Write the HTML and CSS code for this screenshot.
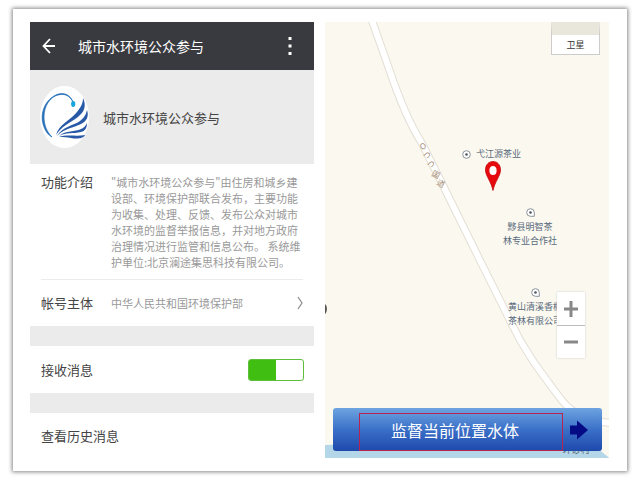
FILE: index.html
```
<!DOCTYPE html>
<html lang="zh-CN">
<head>
  <meta charset="UTF-8">
  <meta name="viewport" content="width=device-width, initial-scale=1.0">
  <title>城市水环境公众参与</title>
  <link rel="stylesheet" href="styles.css">
</head>
<body>

<main class="frame">
  <section class="account">
    <header class="topbar">
      <button class="icon-btn" type="button" aria-label="返回">
        <svg width="14" height="16" viewBox="0 0 14 16">
          <path d="M8 1 L1.5 8 L8 15 M1.5 8 H13" fill="none" stroke="#fff" stroke-width="1.8"/>
        </svg>
      </button>
      <h1>城市水环境公众参与</h1>
      <button class="icon-btn" type="button" aria-label="更多">
        <svg width="4" height="20" viewBox="0 0 4 20">
          <g fill="#fff">
            <rect x="0.5" y="1" width="3" height="3"/>
            <rect x="0.5" y="8.5" width="3" height="3"/>
            <rect x="0.5" y="16" width="3" height="3"/>
          </g>
        </svg>
      </button>
    </header>

    <div class="profile">
      <svg class="avatar" width="49" height="62" viewBox="0 0 49 62">
        <ellipse cx="24.5" cy="31" rx="24.5" ry="31" fill="#fff"/>
        <path d="M33 16 C30 8 22 5 14 10 C5 15 0 27 3 38 C5 45 8 49 12 51 C7 46 4 39 4 31 C4 20 10 11 18 9 C25 7 30 10 33 16Z" fill="#2870b8" stroke="#2870b8" stroke-width="0.7"/>
        <ellipse cx="33.2" cy="18" rx="2.1" ry="3" fill="#18a5dd"/>
        <g fill="#2759a6">
          <path d="M16 49 C19 38 30 35 37 26 C42 20 43 16 43 12 C46 18 45 24 41 28 C34 36 24 37 16 49Z"/>
          <path d="M17 50 C23 40 33 40 40 35 C45 31 46 28 47 24 C49 30 47 35 41 38 C33 42 25 42 17 50Z"/>
          <path d="M19 50 C26 44 35 46 41 43 C44 42 46 39 47 37 C47 42 45 45 41 46 C33 48 26 46 19 50Z"/>
          <path d="M19 51 C27 48 36 51 45 49 C43 53 36 53 31 52 C27 51 24 51 19 51Z"/>
        </g>
      </svg>
      <h2>城市水环境公众参与</h2>
    </div>

    <div class="details">
      <div class="row intro">
        <span class="label">功能介绍</span>
        <p>"城市水环境公众参与"由住房和城乡建<br>设部、环境保护部联合发布，主要功能<br>为收集、处理、反馈、发布公众对城市<br>水环境的监督举报信息，并对地方政府<br>治理情况进行监管和信息公布。 系统维<br>护单位:北京澜途集思科技有限公司。</p>
      </div>
      <a class="row owner" href="#">
        <span class="label">帐号主体</span>
        <span class="value">中华人民共和国环境保护部</span>
        <svg width="6" height="14" viewBox="0 0 6 14">
          <path d="M1 1 L5 7 L1 13" fill="none" stroke="#888" stroke-width="1.2"/>
        </svg>
      </a>
    </div>

    <div class="row receive">
      <label class="label" for="receive">接收消息</label>
      <input class="switch" type="checkbox" id="receive" checked>
    </div>

    <a class="row history" href="#">查看历史消息</a>
  </section>

  <section class="map">
    <svg class="tiles" viewBox="0 0 284 435" preserveAspectRatio="xMidYMid slice">
      <rect width="284" height="435" fill="#fbf8ef"/>
      <path d="M0 422 L120 418 L273 426 L284 435 H0Z" fill="#b3d6e8"/>
      <g fill="none" stroke-linejoin="round">
        <path d="M47 -2 L64 46 C76 82 86 104 97 121 L122 171 L155 238 L185 298 C200 330 216 350 237 378 C248 391 264 399 286 400" stroke="#e4dfd6" stroke-width="8"/>
        <path d="M47 -2 L64 46 C76 82 86 104 97 121 L122 171 L155 238 L185 298 C200 330 216 350 237 378 C248 391 264 399 286 400" stroke="#fff" stroke-width="6"/>
      </g>
      <g class="road-name">
        <text transform="translate(98 124) rotate(-28)" y="3">O</text>
        <text transform="translate(102 133) rotate(-28)" y="3">つ</text>
        <text transform="translate(106 142) rotate(-28)" y="3">つ</text>
        <text transform="translate(111 152) rotate(28)" y="3">国</text>
        <text transform="translate(116 161) rotate(28)" y="3">道</text>
      </g>
      <path d="M0 281 C3 283 3 289 0 292Z" fill="#555"/>
      <text class="village" x="251" y="430">环砂村</text>
    </svg>

    <div class="poi poi-jiangyuan">
      <svg width="9" height="9" viewBox="0 0 9 9">
        <circle cx="4.5" cy="4.5" r="3.8" fill="#fff" stroke="#8b929b"/>
        <circle cx="4.5" cy="4.5" r="1.3" fill="#4d5560"/>
      </svg>
      <span>弋江源茶业</span>
    </div>
    <div class="poi poi-mingzhi">
      <svg width="9" height="9" viewBox="0 0 9 9">
        <path d="M8.3 8.3 H4.5 A3.8 3.8 0 1 1 8.3 4.5Z" fill="#fff" stroke="#8b929b"/>
        <circle cx="4.5" cy="4.5" r="1.3" fill="#4d5560"/>
      </svg>
      <span>黟县明智茶<br>林专业合作社</span>
    </div>
    <div class="poi poi-qingxi">
      <svg width="9" height="9" viewBox="0 0 9 9">
        <path d="M8.3 8.3 H4.5 A3.8 3.8 0 1 1 8.3 4.5Z" fill="#fff" stroke="#8b929b"/>
        <circle cx="4.5" cy="4.5" r="1.3" fill="#4d5560"/>
      </svg>
      <span>黄山清溪香榧<br>茶林有限公司</span>
    </div>

    <svg class="pin" width="16" height="30" viewBox="0 0 16 30">
      <path d="M8 0.5 C3.5 0.5 0.5 4 0.5 9 C0.5 15 6 20 8 29.5 C10 20 15.5 15 15.5 9 C15.5 4 12.5 0.5 8 0.5Z" fill="#e60a0e" stroke="#c00b10" stroke-width="0.8"/>
      <ellipse cx="8" cy="9.5" rx="3.6" ry="4.5" fill="#fff"/>
    </svg>

    <button class="layer" type="button">卫星</button>

    <div class="zoom">
      <button type="button" aria-label="放大">
        <svg width="14" height="18" viewBox="0 0 14 18">
          <path d="M7 1 V17 M0 9 H14" stroke="#888" stroke-width="3"/>
        </svg>
      </button>
      <button type="button" aria-label="缩小">
        <svg width="14" height="18" viewBox="0 0 14 18">
          <path d="M0 9 H14" stroke="#888" stroke-width="3"/>
        </svg>
      </button>
    </div>

    <button class="supervise" type="button">
      <span class="supervise-text">监督当前位置水体</span>
      <svg width="18" height="20" viewBox="0 0 18 20">
        <path d="M0 5.5 H7 V0.5 L18 10 L7 19.5 V14.5 H0Z" fill="#050a85"/>
      </svg>
    </button>
  </section>
</main>

</body>
</html>
```
FILE: styles.css
```
* {
  box-sizing: border-box;
}
body {
  margin: 0;
  padding: 9px 13px;
  background-color: #fff;
  font-family: "Noto Sans CJK SC", sans-serif;
  color: #444;
}
h1, h2, p {
  margin: 0;
  font-weight: normal;
}
button {
  padding: 0;
  border: none;
  font-family: inherit;
  cursor: pointer;
}
a {
  color: inherit;
  text-decoration: none;
}
svg {
  display: block;
  flex-shrink: 0;
}
.frame {
  display: grid;
  grid-template-columns: 1fr 1fr;
  gap: 11px;
  padding: 13px 18px 13px 17px;
  background-color: #fff;
  box-shadow: 0 0 4px 1px #888;
}

/* account page */
.topbar {
  display: flex;
  align-items: center;
  height: 48px;
  padding: 0 22px 0 12px;
  background-color: #393a3f;
}
.topbar h1 {
  flex: 1;
  margin-left: 22px;
  font-size: 14px;
  color: #fff;
}
.icon-btn {
  background: none;
}
.profile {
  display: flex;
  align-items: center;
  gap: 14px;
  height: 94px;
  padding: 0 10px;
  background-color: #ebebeb;
}
.profile h2 {
  font-size: 13px;
}
.details {
  padding: 0 11px;
}
.row {
  display: flex;
  align-items: center;
  font-size: 13px;
}
.label {
  width: 70px;
  line-height: 16px;
}
.intro {
  align-items: flex-start;
  padding: 10px 0 9px;
  border-bottom: 1px solid #ececec;
}
.intro p {
  font-size: 11px;
  line-height: 16px;
  color: #999;
  white-space: nowrap;
}
.owner {
  height: 46px;
}
.value {
  flex: 1;
  font-size: 11px;
  color: #999;
}
.receive {
  justify-content: space-between;
  height: 87px;
  padding: 0 10px 0 11px;
  border-top: 20px solid #ebebeb;
  border-bottom: 20px solid #ebebeb;
}
.switch {
  appearance: none;
  width: 56px;
  height: 22px;
  margin: 0;
  border: 1px solid #5fbf3c;
  border-radius: 3px;
  background: linear-gradient(to right, #41be12 50%, #fff 50%);
}
.history {
  height: 45px;
  padding: 0 11px;
}

/* map page */
.map {
  position: relative;
  overflow: hidden;
  background-color: #fbf8ef;
}
.tiles {
  position: absolute;
  width: 100%;
  height: 100%;
}
.road-name {
  font-size: 8px;
  fill: #a58c74;
  text-anchor: middle;
}
.village {
  font-size: 9px;
  fill: #596572;
  text-anchor: middle;
}
.poi {
  position: absolute;
  display: flex;
  flex-direction: column;
  align-items: center;
  gap: 3px;
  font-size: 9px;
  line-height: 14px;
  color: #596a7c;
  text-align: center;
  white-space: nowrap;
}
.poi-jiangyuan {
  top: 125px;
  left: 137px;
  flex-direction: row;
  gap: 5px;
}
.poi-mingzhi {
  top: 186px;
  left: 178px;
}
.poi-qingxi {
  top: 266px;
  left: 183px;
}
.pin {
  position: absolute;
  top: 139px;
  left: 160px;
}
.layer {
  position: absolute;
  top: 0;
  right: 9px;
  width: 49px;
  height: 33px;
  border: 1px solid #ccc;
  border-top: 13px solid #e9e6dc;
  background-color: #fff;
  font-size: 9px;
  color: #333;
}
.zoom {
  position: absolute;
  right: 24px;
  bottom: 100px;
  width: 28px;
  background-color: #fff;
  box-shadow: 0 0 2px #ccc;
}
.zoom button {
  display: flex;
  align-items: center;
  justify-content: center;
  width: 100%;
  height: 33px;
  background: none;
}
.zoom button + button {
  border-top: 1px solid #bbb;
}
.supervise {
  position: absolute;
  right: 7px;
  bottom: 7px;
  left: 8px;
  display: flex;
  align-items: center;
  gap: 7px;
  height: 43px;
  padding: 0 14px 0 26px;
  border-radius: 3px;
  background: linear-gradient(#6ea4e0, #3b70c8 50%, #1e49ac);
}
.supervise-text {
  flex: 1;
  align-self: flex-end;
  height: 38px;
  padding-right: 12px;
  border: 1px solid #b92352;
  font-size: 16px;
  line-height: 32px;
  color: #fff;
}
```
